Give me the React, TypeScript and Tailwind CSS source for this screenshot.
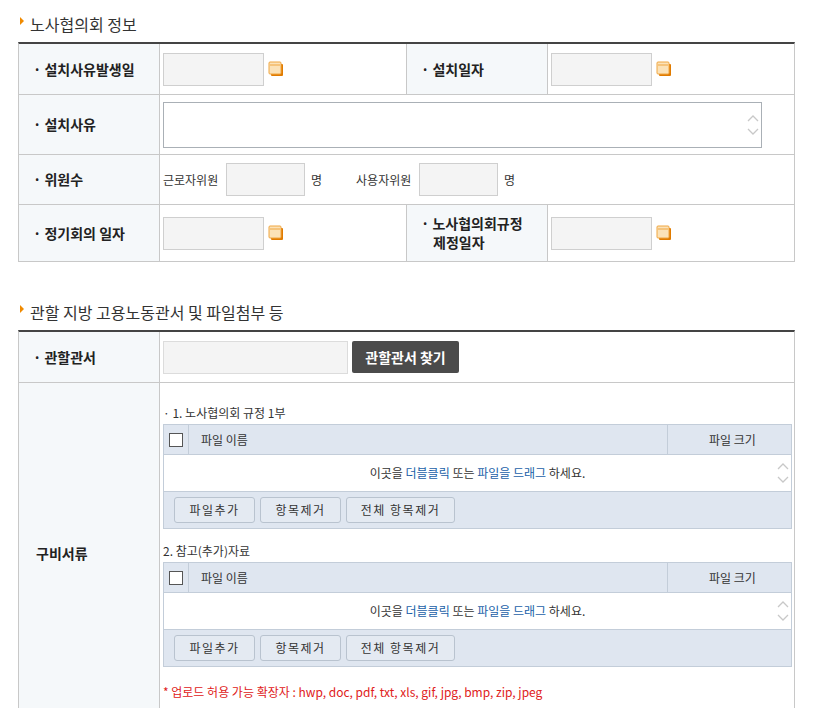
import React from "react";

const Cal = () => (
  <svg width="16" height="16" viewBox="0 0 16 16" className="shrink-0">
    <rect x="3" y="3" width="12" height="12" rx="1" fill="#e07b00" />
    <rect x="1" y="1" width="12" height="12" rx="1" fill="#fbe2b8" stroke="#f0a640" strokeWidth="1" />
    <path d="M2 4h10" stroke="#f0a640" strokeWidth="1" />
  </svg>
);

const Title = ({ t }: { t: string }) => (
  <div className="flex items-center gap-[6px] h-[24px] pl-[20px] text-[16px] text-[#333]">
    <span className="w-0 h-0 border-y-[4px] border-y-transparent border-l-[4px] border-l-[#f08a00] -mt-[6px]" />
    <span>{t}</span>
  </div>
);

const Label = ({ children, w = "w-[140px]" }: { children: React.ReactNode; w?: string }) => (
  <div className={`${w} shrink-0 bg-[#f5f8fa] flex items-center pl-[14px] text-[14px] font-bold text-[#222]`}>{children}</div>
);

const DateIn = () => (
  <div className="flex items-center gap-[4px]">
    <div className="w-[101px] h-[33px] bg-[#f4f4f4] border border-[#cfcfcf]" />
    <Cal />
  </div>
);

const Arrows = () => (
  <div className="flex flex-col items-center justify-center gap-[6px] w-[16px] text-[#bbb]">
    <svg width="12" height="8" viewBox="0 0 12 8"><path d="M1 7l5-5 5 5" fill="none" stroke="#c8c8c8" strokeWidth="1.3" /></svg>
    <svg width="12" height="8" viewBox="0 0 12 8"><path d="M1 1l5 5 5-5" fill="none" stroke="#c8c8c8" strokeWidth="1.3" /></svg>
  </div>
);

const FileBox = ({ title }: { title: string }) => (
  <div className="text-[12px] text-[#333]">
    <div className="h-[20px] leading-[18px]">{title}</div>
    <div className="border border-[#c3cdd9] w-[629px]">
      <div className="flex h-[30px] bg-[#dfe6f0] border-b border-[#c3cdd9]">
        <div className="w-[25px] border-r border-[#c3cdd9] flex items-center justify-center">
          <div className="w-[14px] h-[14px] bg-white border border-[#555]" />
        </div>
        <div className="flex-1 flex items-center pl-[12px] border-r border-[#c3cdd9]">파일 이름</div>
        <div className="w-[123px] flex items-center justify-center pl-[6px]">파일 크기</div>
      </div>
      <div className="flex h-[37px] bg-white border-b border-[#c3cdd9]">
        <div className="flex-1 flex items-center justify-center pl-[16px]">
          이곳을&nbsp;<span className="text-[#1a5fa8]">더블클릭</span>&nbsp;또는&nbsp;<span className="text-[#1a5fa8]">파일을 드래그</span>&nbsp;하세요.
        </div>
        <Arrows />
      </div>
      <div className="flex items-center gap-[5px] h-[36px] bg-[#dfe6f0] pl-[10px]">
        {[["파일추가", "w-[81px]"], ["항목제거", "w-[81px]"], ["전체 항목제거", "w-[109px]"]].map(([b, w]) => (
          <div key={b} className={`${w} h-[26px] flex items-center justify-center border border-[#b9c3cf] rounded-[3px] bg-[#e4eaf2] tracking-[1.5px]`}>{b}</div>
        ))}
      </div>
    </div>
  </div>
);

export default function App() {
  return (
    <div className="w-[821px] h-[708px] overflow-hidden bg-white pt-[12px]" style={{ fontFamily: '"Noto Sans CJK KR", "Noto Sans", sans-serif' }}>
      <Title t="노사협의회 정보" />
      <div className="ml-[18px] mt-[6px] w-[777px] border-t-2 border-[#444] border-x border-x-[#c8c8c8]">
        <div className="flex h-[51px] border-b border-[#c8c8c8]">
          <Label>· 설치사유발생일</Label>
          <div className="w-[248px] border-x border-[#c8c8c8] flex items-center pl-[3px]"><DateIn /></div>
          <Label>· 설치일자</Label>
          <div className="flex-1 border-l border-[#c8c8c8] flex items-center pl-[3px]"><DateIn /></div>
        </div>
        <div className="flex h-[60px] border-b border-[#c8c8c8]">
          <Label>· 설치사유</Label>
          <div className="flex-1 border-l border-[#c8c8c8] flex items-center pl-[3px]">
            <div className="w-[599px] h-[46px] border border-[#aab0b6] flex justify-end"><Arrows /></div>
          </div>
        </div>
        <div className="flex h-[50px] border-b border-[#c8c8c8]">
          <Label>· 위원수</Label>
          <div className="flex-1 border-l border-[#c8c8c8] flex items-center pl-[3px] text-[12px] text-[#333]">
            <span className="w-[59px]">근로자위원</span>
            <div className="ml-[4px] w-[79px] h-[33px] bg-[#f4f4f4] border border-[#cfcfcf]" />
            <span className="ml-[6px]">명</span>
            <span className="ml-[34px] w-[59px]">사용자위원</span>
            <div className="ml-[4px] w-[79px] h-[33px] bg-[#f4f4f4] border border-[#cfcfcf]" />
            <span className="ml-[6px]">명</span>
          </div>
        </div>
        <div className="flex h-[57px] border-b border-[#c8c8c8]">
          <Label>· 정기회의 일자</Label>
          <div className="w-[248px] border-x border-[#c8c8c8] flex items-center pl-[3px]"><DateIn /></div>
          <div className="w-[140px] shrink-0 bg-[#f5f8fa] flex flex-col justify-center pl-[14px] text-[14px] font-bold text-[#222] leading-[19px]">
            <span>· 노사협의회규정</span>
            <span className="pl-[12px]">제정일자</span>
          </div>
          <div className="flex-1 border-l border-[#c8c8c8] flex items-center pl-[3px]"><DateIn /></div>
        </div>
      </div>

      <div className="mt-[38px]"><Title t="관할 지방 고용노동관서 및 파일첨부 등" /></div>
      <div className="ml-[18px] mt-[6px] w-[777px] border-t-2 border-[#444] border-x border-x-[#c8c8c8]">
        <div className="flex h-[51px] border-b border-[#c8c8c8]">
          <Label>· 관할관서</Label>
          <div className="flex-1 border-l border-[#c8c8c8] flex items-center pl-[3px] gap-[4px]">
            <div className="w-[185px] h-[33px] bg-[#f4f4f4] border border-[#dcdcdc]" />
            <div className="w-[107px] h-[32px] bg-[#4b4b4b] rounded-[2px] text-white font-bold text-[14px] flex items-center justify-center">관할관서 찾기</div>
          </div>
        </div>
        <div className="flex h-[340px]">
          <div className="w-[140px] shrink-0 bg-[#f5f8fa] flex items-center pl-[17px] text-[14px] font-bold text-[#222]">구비서류</div>
          <div className="flex-1 border-l border-[#c8c8c8] pl-[3px] pt-[21px]">
            <FileBox title="· 1. 노사협의회 규정 1부" />
            <div className="mt-[13px]"><FileBox title="2. 참고(추가)자료" /></div>
            <div className="mt-[16px] text-[12px] text-[#e02020]">* 업로드 허용 가능 확장자 : hwp, doc, pdf, txt, xls, gif, jpg, bmp, zip, jpeg</div>
          </div>
        </div>
      </div>
    </div>
  );
}
